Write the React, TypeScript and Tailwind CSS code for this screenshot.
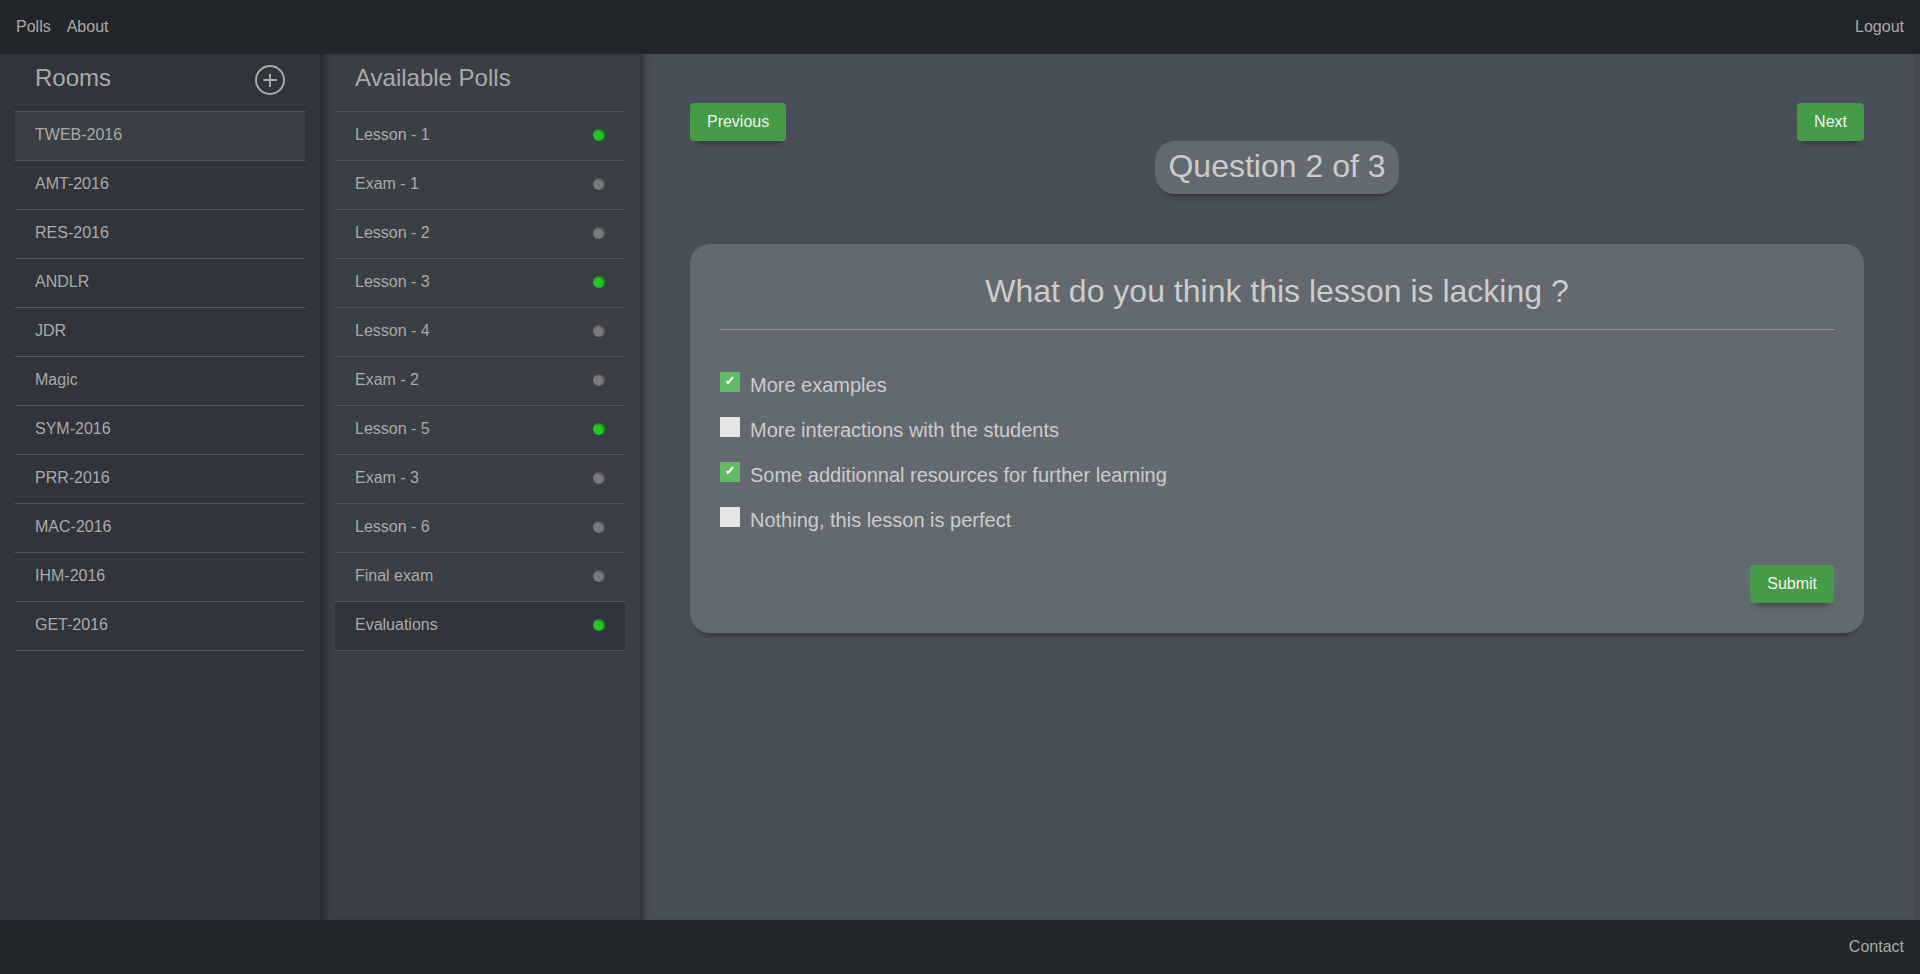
import React, { useState } from "react";

const rooms = [
  "TWEB-2016", "AMT-2016", "RES-2016", "ANDLR", "JDR", "Magic",
  "SYM-2016", "PRR-2016", "MAC-2016", "IHM-2016", "GET-2016",
];

const polls = [
  { name: "Lesson - 1", open: true },
  { name: "Exam - 1", open: false },
  { name: "Lesson - 2", open: false },
  { name: "Lesson - 3", open: true },
  { name: "Lesson - 4", open: false },
  { name: "Exam - 2", open: false },
  { name: "Lesson - 5", open: true },
  { name: "Exam - 3", open: false },
  { name: "Lesson - 6", open: false },
  { name: "Final exam", open: false },
  { name: "Evaluations", open: true },
];

const answers = [
  "More examples",
  "More interactions with the students",
  "Some additionnal resources for further learning",
  "Nothing, this lesson is perfect",
];

function GreenButton({ children }: { children: React.ReactNode }) {
  return (
    <button
      type="button"
      className="h-[38px] cursor-pointer rounded bg-[#469b46] px-[17px] text-base leading-6 text-[#f0f0f0] shadow-[0_8px_6px_-6px_rgba(0,0,0,0.4)]"
    >
      {children}
    </button>
  );
}

function Row({ name, active, activeClass, children }: {
  name: string;
  active: boolean;
  activeClass: string;
  children?: React.ReactNode;
}) {
  return (
    <li className="border-b border-[#555]">
      <a
        href="#"
        aria-current={active ? "true" : undefined}
        className={`flex h-12 items-center justify-between px-5 pb-0.5 ${active ? activeClass : ""}`}
      >
        {name}
        {children}
      </a>
    </li>
  );
}

export default function App() {
  const [checked, setChecked] = useState([true, false, true, false]);
  const toggle = (i: number) => setChecked(checked.map((c, j) => (j === i ? !c : c)));

  return (
    <div className="flex min-h-screen flex-col bg-[#494f59] font-['Liberation_Sans',Arial,sans-serif] text-base text-[#aaa]">
      <header className="flex h-[54px] items-center justify-between bg-[#222529] px-4">
        <nav className="flex gap-4">
          <a href="#">Polls</a>
          <a href="#">About</a>
        </nav>
        <a href="#">Logout</a>
      </header>

      <div className="flex grow">
        <section className="w-1/6 bg-[#31343c] px-[15px]">
          <div className="flex h-[57px] items-start justify-between px-5 pt-[10px]">
            <h2 className="text-2xl leading-7">Rooms</h2>
            <button type="button" aria-label="Add room" className="mt-px size-[30px] cursor-pointer">
              <svg viewBox="0 0 30 30" className="size-full" fill="none" stroke="currentColor" strokeWidth="2">
                <circle cx="15" cy="15" r="14" />
                <path d="M8.5 15h13.5M15 9v13" />
              </svg>
            </button>
          </div>
          <ul className="border-t border-[#555]">
            {rooms.map((room, i) => (
              <Row key={room} name={room} active={i === 0} activeClass="bg-[#3a3e45]" />
            ))}
          </ul>
        </section>

        <section className="w-1/6 bg-[#3a3e45] px-[15px] shadow-[inset_8px_0_8px_-6px_rgba(0,0,0,0.5)]">
          <div className="h-[57px] px-5 pt-[10px]">
            <h2 className="text-2xl leading-7">Available Polls</h2>
          </div>
          <ul className="border-t border-[#555]">
            {polls.map((poll) => (
              <Row key={poll.name} name={poll.name} active={poll.name === "Evaluations"} activeClass="bg-[#31343c]">
                <span
                  className={`size-3 rounded-full shadow-[inset_-1px_1px_2px_rgba(0,0,0,0.4)] ${poll.open ? "bg-[#22c722]" : "bg-[#7a7a7a]"}`}
                />
              </Row>
            ))}
          </ul>
        </section>

        <main className="flex min-w-0 flex-1 flex-col border-r-[6px] border-[#44484f] px-[50px] pt-[49px] text-[#ccc] shadow-[inset_8px_0_8px_-6px_rgba(0,0,0,0.5)]">
          <div className="flex justify-between">
            <GreenButton>Previous</GreenButton>
            <GreenButton>Next</GreenButton>
          </div>
          <h1 className="self-center rounded-[20px] bg-[#636970] px-[13px] pt-2 pb-[10px] text-[32px] leading-[35px] shadow-[0_8px_6px_-6px_rgba(0,0,0,0.4)]">
            Question 2 of 3
          </h1>

          <form
            onSubmit={(e) => e.preventDefault()}
            className="mt-[50px] rounded-[20px] bg-[#636970] p-[30px] shadow-[0_8px_6px_-6px_rgba(0,0,0,0.4)]"
          >
            <h2 className="border-b border-[#999] pb-5 text-center text-[32px] leading-[35px]">
              What do you think this lesson is lacking ?
            </h2>
            <div className="mt-[42px] flex flex-col gap-[15px]">
              {answers.map((answer, i) => (
                <label key={answer} className="flex h-[30px] cursor-pointer gap-[10px] text-xl leading-[26px]">
                  <span className="grid size-5">
                    <input
                      type="checkbox"
                      checked={checked[i]}
                      onChange={() => toggle(i)}
                      className="col-start-1 row-start-1 size-5 appearance-none bg-[#e6e6e6] checked:bg-[#60bb64]"
                    />
                    {checked[i] && (
                      <svg viewBox="0 0 20 20" className="pointer-events-none col-start-1 row-start-1 size-5" fill="#fff">
                        <path d="M5.7 9.2L7.4 8.4L8.3 9.2L11.4 5.1L13.5 4.8L13.3 6.6L8.8 11.8L7.1 12.2Z" />
                      </svg>
                    )}
                  </span>
                  {answer}
                </label>
              ))}
            </div>
            <div className="mt-7 flex justify-end">
              <GreenButton>Submit</GreenButton>
            </div>
          </form>
        </main>
      </div>

      <footer className="flex h-[54px] items-center justify-end bg-[#222529] px-4">
        <a href="#">Contact</a>
      </footer>
    </div>
  );
}
